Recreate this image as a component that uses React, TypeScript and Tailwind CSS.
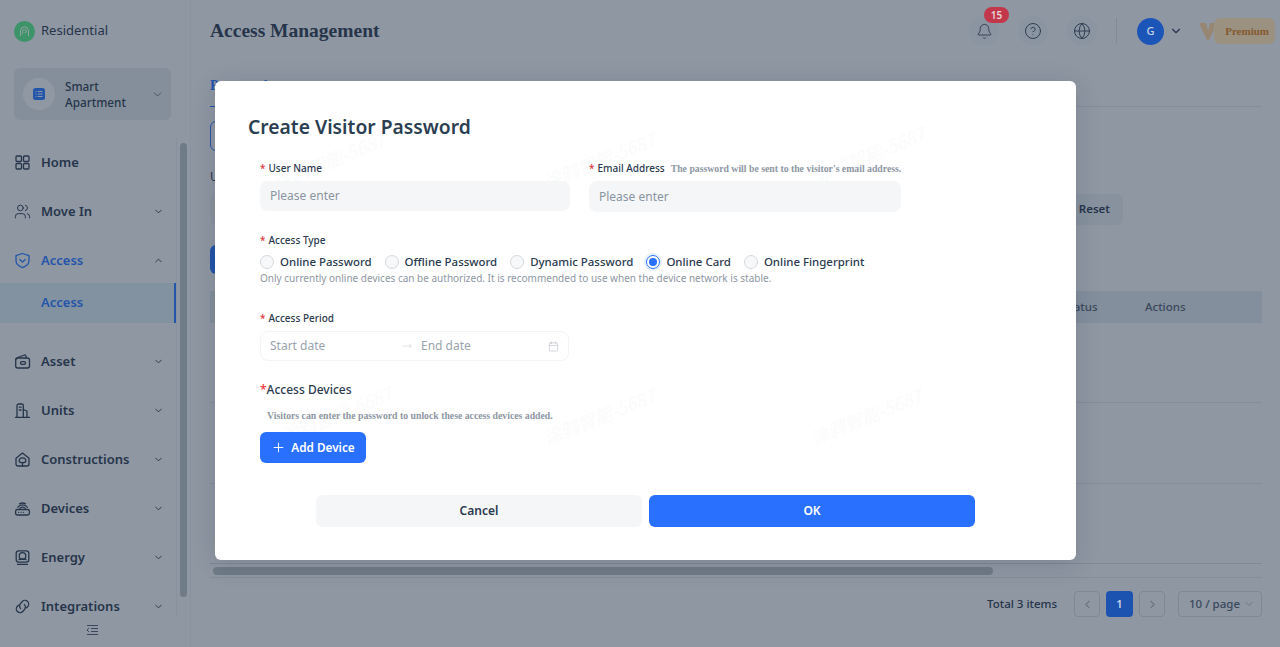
import { Bell, Calendar, ChevronDown, ChevronLeft, ChevronRight, ChevronUp, CircleHelp, Globe, MoveRight, Plus, Users } from 'lucide-react';
import type { ReactNode } from 'react';

const Svg = ({ children }: { children: ReactNode }) => (
  <svg width="17" height="17" viewBox="0 0 17 17" fill="none" stroke="currentColor" strokeWidth="1.3" strokeLinecap="round" strokeLinejoin="round">
    {children}
  </svg>
);

const HomeIcon = () => (
  <Svg>
    <rect x="2" y="2" width="5.5" height="5.5" rx="1" />
    <rect x="9.5" y="2" width="5.5" height="5.5" rx="1" />
    <rect x="2" y="9.5" width="5.5" height="5.5" rx="1" />
    <rect x="9.5" y="9.5" width="5.5" height="5.5" rx="1" />
  </Svg>
);

const ShieldIcon = () => (
  <Svg>
    <path d="M8.5 1.5 15 3.6v5c0 3.4-2.9 5.9-6.5 7-3.6-1.1-6.5-3.6-6.5-7v-5z" />
    <path d="m5.8 7.6 2.7 2.4 2.7-2.4" />
  </Svg>
);

const WalletIcon = () => (
  <Svg>
    <path d="M2 6.5c0-1 .8-1.6 1.6-2L10.5 2c.8-.2 1.5.3 1.5 1.2V5" />
    <rect x="1.7" y="5" width="13.8" height="10" rx="2" />
    <rect x="6.5" y="8.6" width="5" height="2.8" rx="1.4" />
  </Svg>
);

const UnitsIcon = () => (
  <Svg>
    <path d="M3 15V3.5C3 2.5 3.8 2 4.6 2h3.2c.9 0 1.5.6 1.5 1.5V15" />
    <path d="M9.3 7.5 13 9v6" />
    <path d="M1.5 15.3h14" />
    <path d="M5.3 5.2h1.8M5.3 8h1.8" />
  </Svg>
);

const ConstructionsIcon = () => (
  <Svg>
    <path d="M2 7.2 8.5 2 15 7.2V13c0 1.2-.9 2-2 2H4c-1.1 0-2-.8-2-2z" />
    <path d="M8.5 15v-3.5M5.2 9.8a3.3 3 0 0 1 6.6 0c0 1.4-1.4 2-3.3 2s-3.3-.6-3.3-2z" />
  </Svg>
);

const DevicesIcon = () => (
  <Svg>
    <rect x="1.6" y="9.5" width="13.8" height="5.5" rx="1.8" />
    <path d="M4.5 12.3h.1M7 12.3h.1M9.5 12.3h.1" />
    <path d="M3.8 7.2a6 6 0 0 1 9.4 0M5.8 8.4a3.4 3.4 0 0 1 5.4 0" />
    <path d="M5.5 3.8a6.5 6.5 0 0 1 6 0" />
  </Svg>
);

const EnergyIcon = () => (
  <Svg>
    <rect x="2.2" y="1.8" width="12.6" height="11.4" rx="2.4" />
    <circle cx="8.5" cy="7" r="3.3" />
    <path d="M5 10.6c1-.8 6-.8 7 0M3.5 15.4h10" />
  </Svg>
);

const IntegrationsIcon = () => (
  <Svg>
    <path d="M10.3 6.4a3.8 3.8 0 0 1 0 5.4l-1.6 1.7a3.7 3.7 0 0 1-5.3-5.2l1-1" />
    <path d="M6.7 10.6a3.8 3.8 0 0 1 0-5.4l1.6-1.7a3.7 3.7 0 0 1 5.3 5.2l-1 1" />
  </Svg>
);

const navTop = [
  { label: 'Home', icon: <HomeIcon /> },
  { label: 'Move In', icon: <Users size={17} strokeWidth={1.4} />, arrow: true },
];

const navBottom = [
  { label: 'Asset', icon: <WalletIcon /> },
  { label: 'Units', icon: <UnitsIcon /> },
  { label: 'Constructions', icon: <ConstructionsIcon /> },
  { label: 'Devices', icon: <DevicesIcon /> },
  { label: 'Energy', icon: <EnergyIcon /> },
  { label: 'Integrations', icon: <IntegrationsIcon /> },
];

const radios = ['Online Password', 'Offline Password', 'Dynamic Password', 'Online Card', 'Online Fingerprint'];

const marks = [
  'left-[55px] top-[66px]',
  'left-[325px] top-[66px]',
  'left-[595px] top-[60px]',
  'left-[62px] top-[320px]',
  'left-[325px] top-[322px]',
  'left-[592px] top-[322px]',
];

function NavRow({ label, icon, arrow }: { label: string; icon: ReactNode; arrow?: boolean }) {
  return (
    <div className="flex h-[49px] items-center pl-[14px] pr-[12px] text-[#34465c]">
      <span className="flex w-[27px] shrink-0">{icon}</span>
      <span className="flex-1 text-[13px] font-semibold">{label}</span>
      {arrow && <ChevronDown size={11} strokeWidth={2} />}
    </div>
  );
}

function Required({ children }: { children: ReactNode }) {
  return (
    <label className="flex shrink-0 items-center whitespace-nowrap text-[10px] font-medium leading-[14px] text-[#2b3a4e]">
      <span className="mr-[3px] text-[#e5353b]">*</span>
      {children}
    </label>
  );
}

export default function App() {
  return (
    <div className="relative flex h-[647px] w-[1280px] overflow-hidden bg-[#e8eef5] font-['Noto_Sans',sans-serif]">
      <aside className="flex w-[191px] shrink-0 flex-col border-r border-[#dde4ec] bg-[#e8eef5]">
        <div className="flex h-[62px] items-center gap-[6px] px-[14px]">
          <div className="flex h-[21px] w-[21px] items-center justify-center rounded-full bg-[#5be98f]">
            <svg width="13" height="13" viewBox="0 0 13 13" fill="none" stroke="#f0fff6" strokeWidth="1">
              <path d="M2.5 11V5.8a4 4 0 0 1 8 0V11" />
              <path d="M4.7 9V6a1.8 1.8 0 0 1 3.6 0v1.2H6.4" />
            </svg>
          </div>
          <span className="text-[13px] text-[#34465c]">Residential</span>
        </div>
        <div className="ml-[14px] mt-[6px] flex h-[52px] w-[157px] items-center rounded-md bg-[#d7e1e7] pl-[9px] pr-[7px]">
          <div className="flex h-[32px] w-[32px] shrink-0 items-center justify-center rounded-full bg-[#e9f0f4]">
            <svg width="14" height="14" viewBox="0 0 14 14">
              <rect x="1" y="1" width="12" height="12" rx="2.5" fill="#2f7cff" />
              <path d="M3.5 4.5h1M5.8 4.5h4.7M3.5 7h1M5.8 7h4.7M3.5 9.5h1M5.8 9.5h4.7" stroke="#e8f0ff" strokeWidth="1" />
            </svg>
          </div>
          <span className="ml-[10px] w-[70px] flex-1 text-[11.75px] font-medium leading-[16px] text-[#34465c]">Smart Apartment</span>
          <ChevronDown size={13} strokeWidth={1.5} className="text-[#55667a]" />
        </div>
        <div className="mt-[18px] flex h-[479px] overflow-hidden">
          <nav className="w-[176px] shrink-0">
            {navTop.map((item) => (
              <NavRow key={item.label} {...item} />
            ))}
            <div className="flex h-[47px] items-center pl-[14px] pr-[12px] pt-[2px] text-[#2f7cff]">
              <span className="flex w-[27px] shrink-0">
                <ShieldIcon />
              </span>
              <span className="flex-1 text-[13px] font-semibold">Access</span>
              <ChevronUp size={11} strokeWidth={2} className="text-[#34465c]" />
            </div>
            <div className="mb-[14px] flex h-[40px] items-center border-r-2 border-[#2f7cff] bg-[#d5e6f2] pl-[41px] text-[13px] font-semibold text-[#2f7cff]">
              Access
            </div>
            {navBottom.map((item) => (
              <NavRow key={item.label} {...item} arrow />
            ))}
          </nav>
          <div className="flex-1 border-l border-[#dde4ec] pl-[3px] pt-[5px]">
            <div className="h-[454px] w-[7px] rounded-full bg-[#b1bec3]" />
          </div>
        </div>
        <div className="flex flex-1 items-center justify-center pb-[5px] pr-[5px] text-[#55667a]">
          <svg width="13" height="12" viewBox="0 0 13 12" fill="none" stroke="currentColor" strokeWidth="1">
            <path d="M1 1.5h11M5 4.5h7M5 7.5h7M1 10.5h11M3 4 1 6l2 2" />
          </svg>
        </div>
      </aside>

      <main className="flex min-w-0 flex-1 flex-col">
        <header className="flex h-[62px] items-center pl-[19px] pr-[5px]">
          <h1 className="flex-1 font-['Liberation_Serif',serif] text-[19.5px] font-bold text-[#34465c]">Access Management</h1>
          <div className="relative flex h-[30px] w-[30px] items-center justify-center rounded-full bg-[#e0eaf2] text-[#3f5165]">
            <Bell size={17} strokeWidth={1.3} />
            <span className="absolute left-[15px] top-[-9px] z-10 flex h-[16px] w-[25px] items-center justify-center rounded-full bg-[#c2384a] text-[10px] font-semibold text-[#e6d5d8]">15</span>
          </div>
          <div className="ml-[19px] flex h-[30px] w-[30px] items-center justify-center rounded-full bg-[#e0eaf2] text-[#3f5165]">
            <CircleHelp size={18} strokeWidth={1.3} />
          </div>
          <div className="ml-[19px] flex h-[30px] w-[30px] items-center justify-center rounded-full bg-[#e0eaf2] text-[#3f5165]">
            <Globe size={18} strokeWidth={1.3} />
          </div>
          <div className="ml-[19px] mr-px h-[26px] w-px bg-[#cfd9e3]" />
          <div className="relative z-10 ml-[19px] flex h-[27px] w-[27px] items-center justify-center rounded-full bg-[#1c55b8] text-[11px] font-medium text-[#c9d4e6]">G</div>
          <ChevronDown size={14} strokeWidth={2} className="ml-[5px] text-[#34465c]" />
          <div className="relative ml-[15px] flex h-[26px] w-[77px] items-center justify-end">
            <svg className="absolute left-0 top-[3px]" width="20" height="20" viewBox="0 0 20 20">
              <path d="M1 2h7l2 8 2-8h7l-8 17h-2z" fill="#f7d0a0" />
            </svg>
            <span className="relative flex h-[26px] w-[61px] items-center justify-end rounded-md bg-[#fbe3ba] pr-[6px] font-['Liberation_Serif',serif] text-[11px] font-bold text-[#d9842c]">Premium</span>
          </div>
        </header>

        <section className="flex flex-1 flex-col pl-[19px] pr-[18px]">
          <div className="h-[45px] border-b border-[#d5dee7]">
            <span className="inline-block h-[45px] border-b border-[#2f7cff] pt-[13px] font-['Liberation_Serif',serif] text-[14px] font-bold text-[#2f7cff]">Passwords</span>
          </div>
          <div className="mt-[14px] h-[30px] w-[120px] rounded-md border border-[#2f7cff]" />
          <div className="mt-[18px] text-[12px] leading-[16px] text-[#34465c]">User Name</div>
          <div className="mt-[8px] flex items-center justify-between pr-[139px]">
            <div className="h-[32px] w-[200px] rounded-md bg-[#e0e7ee]" />
            <div className="flex h-[31px] w-[58px] items-center justify-end rounded-md bg-[#dbe5ec] pr-[13px] text-[11.5px] font-semibold text-[#34465c]">Reset</div>
          </div>
          <div className="mt-[20px] h-[29px] w-[120px] rounded-md bg-[#2f7cff]" />
          <div className="mt-[17px] flex h-[32px] items-center bg-[#d5e0ea] text-[11.5px] font-medium text-[#55667a]">
            <span className="ml-[853px] w-[82px]">Status</span>
            <span>Actions</span>
          </div>
          <div className="h-[80px] border-b border-[#d5dee7]" />
          <div className="h-[81px] border-b border-[#d5dee7]" />
          <div className="h-[80px] border-b border-[#cdd6df]" />
          <div className="flex h-[14px] items-center border-b border-[#d5dee7] pl-[3px]">
            <div className="h-[8px] w-[780px] rounded-full bg-[#b1bec3]" />
          </div>
          <div className="mt-[13px] flex items-center justify-end text-[11.5px] text-[#34465c]">
            <span className="mr-[17px] font-medium">Total 3 items</span>
            <span className="flex h-[26px] w-[26px] items-center justify-center rounded-sm border border-[#cdd6df] text-[#a9b5c1]">
              <ChevronLeft size={13} />
            </span>
            <span className="relative z-10 ml-[6px] flex h-[26px] w-[27px] items-center justify-center rounded-sm bg-[#1c52b0] text-[11px] font-semibold text-[#c9d4e6]">1</span>
            <span className="ml-[6px] flex h-[26px] w-[26px] items-center justify-center rounded-sm border border-[#cdd6df] text-[#a9b5c1]">
              <ChevronRight size={13} />
            </span>
            <span className="ml-[13px] flex h-[26px] w-[84px] items-center justify-between rounded-sm border border-[#cdd6df] pl-[10px] pr-[6px] font-medium text-[#55667a]">
              10 / page
              <ChevronDown size={12} className="text-[#a9b5c1]" />
            </span>
          </div>
        </section>
      </main>

      <div className="absolute inset-0 bg-[#141e32]/[0.42]" />

      <div className="absolute left-[215px] top-[81px] h-[479px] w-[861px] overflow-hidden rounded-md bg-white pl-[33px] pt-[33px] text-[#2b3a4e] shadow-[0_4px_24px_rgba(20,30,50,0.15)]">
        {marks.map((pos) => (
          <span key={pos} className={`absolute ${pos} -rotate-[22deg] font-['Noto_Sans_CJK_SC',sans-serif] text-[18px] italic text-[#fbfbfc]`}>
            涂鸦智能-5687
          </span>
        ))}
        <div className="relative">
          <h2 className="text-[19.3px] font-semibold leading-[26px] text-[#2b3e52]">Create Visitor Password</h2>

          <div className="ml-[12px] mt-[21px] flex gap-[19px]">
            <div className="w-[310px]">
              <Required>User Name</Required>
              <div className="mt-[6px] flex h-[30px] items-center rounded-lg bg-[#f5f6f8] pl-[10px] text-[12px] text-[#8a94a0]">Please enter</div>
            </div>
            <div className="w-[312px]">
              <div className="flex items-center">
                <Required>Email Address</Required>
                <span className="ml-[6px] whitespace-nowrap pt-[1px] font-['Liberation_Serif',serif] text-[9.75px] font-bold leading-[13px] text-[#8e97a3]">The password will be sent to the visitor&apos;s email address.</span>
              </div>
              <div className="mt-[6px] flex h-[31px] items-center rounded-lg bg-[#f5f6f8] pl-[10px] text-[12px] text-[#8a94a0]">Please enter</div>
            </div>
          </div>

          <div className="ml-[12px] mt-[21px]">
            <Required>Access Type</Required>
            <div className="mt-[8px] flex h-[14px] items-center gap-[13px]">
              {radios.map((r) => (
                <div key={r} className="flex items-center gap-[6px] whitespace-nowrap text-[11.45px] font-medium text-[#2b3a4e]">
                  {r === 'Online Card' ? (
                    <span className="flex h-[14px] w-[14px] items-center justify-center rounded-full border border-[#2970ff] shadow-[0_0_0_2px_rgba(41,112,255,0.12)]">
                      <span className="h-[8px] w-[8px] rounded-full bg-[#2970ff]" />
                    </span>
                  ) : (
                    <span className="h-[14px] w-[14px] rounded-full border border-[#d5d9de] bg-[#f7f8f9]" />
                  )}
                  {r}
                </div>
              ))}
            </div>
            <p className="mt-[2px] text-[10px] leading-[14px] text-[#8e97a3]">Only currently online devices can be authorized. It is recommended to use when the device network is stable.</p>
          </div>

          <div className="ml-[12px] mt-[26px]">
            <Required>Access Period</Required>
            <div className="mt-[6px] flex h-[30px] w-[309px] items-center rounded-lg border border-[#f3f4f6] pl-[9px] pr-[9px] text-[12px] text-[#9aa3ae]">
              <span className="w-[132px]">Start date</span>
              <MoveRight size={10} strokeWidth={1} className="text-[#b3bac3]" />
              <span className="ml-[9px] flex-1">End date</span>
              <Calendar size={11} strokeWidth={1.2} className="text-[#b3bac3]" />
            </div>
          </div>

          <div className="ml-[12px] mt-[21px]">
            <div className="text-[12px] font-medium leading-[16px] text-[#2b3a4e]">
              <span className="text-[#e5353b]">*</span>Access Devices
            </div>
            <p className="ml-[7px] mt-[11px] font-['Liberation_Serif',serif] text-[9.75px] font-bold leading-[14px] text-[#8e97a3]">Visitors can enter the password to unlock these access devices added.</p>
            <button className="mt-[9px] flex h-[31px] w-[106px] items-center justify-center gap-[5px] rounded-md bg-[#2970ff] text-[11.75px] font-semibold text-white">
              <Plus size={15} strokeWidth={1.5} />
              Add Device
            </button>
          </div>

          <div className="ml-[68px] mt-[32px] flex gap-[7px]">
            <button className="h-[32px] w-[326px] rounded-md bg-[#f5f6f8] text-[12px] font-semibold text-[#2b3a4e]">Cancel</button>
            <button className="h-[32px] w-[326px] rounded-md bg-[#2970ff] text-[12px] font-semibold text-white">OK</button>
          </div>
        </div>
      </div>
    </div>
  );
}
